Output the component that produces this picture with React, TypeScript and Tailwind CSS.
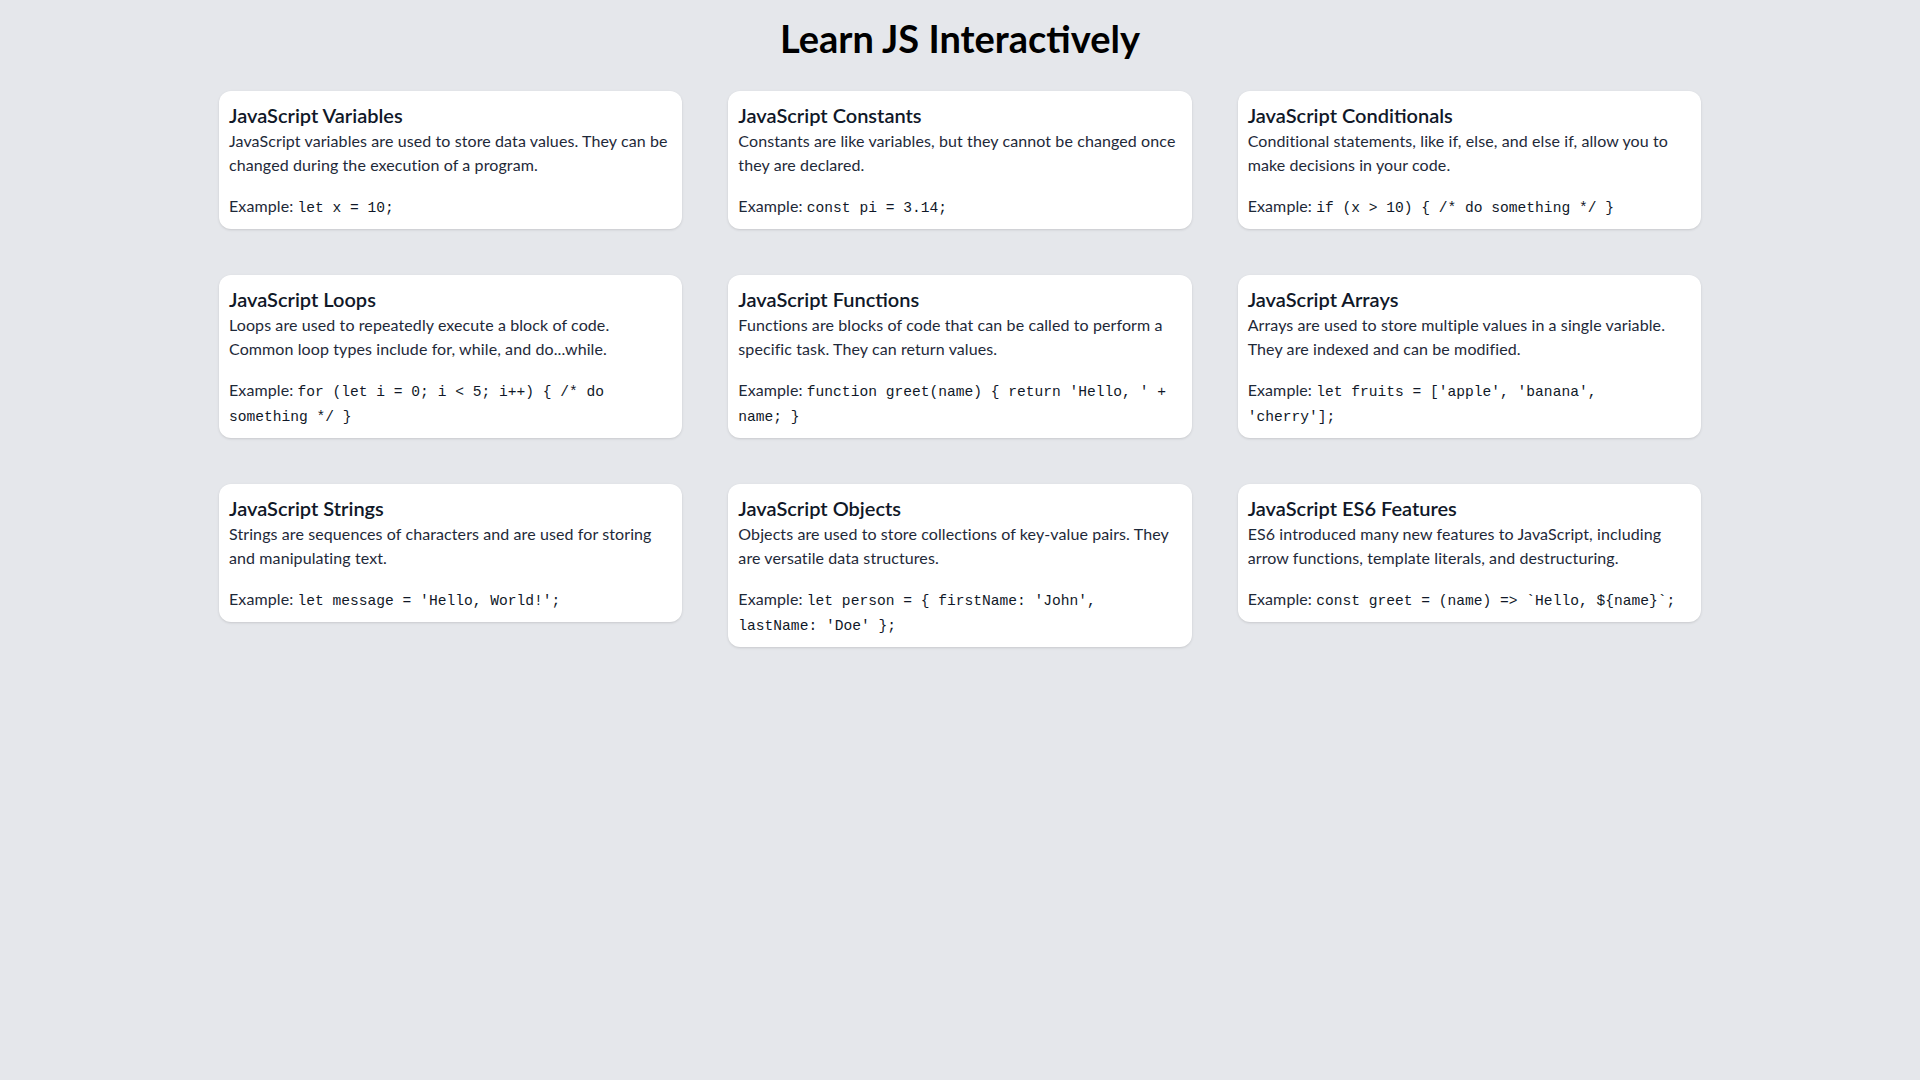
import React from "react";

type Topic = {
  title: string;
  text: string;
  example: string;
};

const topics: Topic[] = [
  {
    title: "JavaScript Variables",
    text: "JavaScript variables are used to store data values. They can be changed during the execution of a program.",
    example: "let x = 10;",
  },
  {
    title: "JavaScript Constants",
    text: "Constants are like variables, but they cannot be changed once they are declared.",
    example: "const pi = 3.14;",
  },
  {
    title: "JavaScript Conditionals",
    text: "Conditional statements, like if, else, and else if, allow you to make decisions in your code.",
    example: "if (x > 10) { /* do something */ }",
  },
  {
    title: "JavaScript Loops",
    text: "Loops are used to repeatedly execute a block of code. Common loop types include for, while, and do...while.",
    example: "for (let i = 0; i < 5; i++) { /* do something */ }",
  },
  {
    title: "JavaScript Functions",
    text: "Functions are blocks of code that can be called to perform a specific task. They can return values.",
    example: "function greet(name) { return 'Hello, ' + name; }",
  },
  {
    title: "JavaScript Arrays",
    text: "Arrays are used to store multiple values in a single variable. They are indexed and can be modified.",
    example: "let fruits = ['apple', 'banana', 'cherry'];",
  },
  {
    title: "JavaScript Strings",
    text: "Strings are sequences of characters and are used for storing and manipulating text.",
    example: "let message = 'Hello, World!';",
  },
  {
    title: "JavaScript Objects",
    text: "Objects are used to store collections of key-value pairs. They are versatile data structures.",
    example: "let person = { firstName: 'John', lastName: 'Doe' };",
  },
  {
    title: "JavaScript ES6 Features",
    text: "ES6 introduced many new features to JavaScript, including arrow functions, template literals, and destructuring.",
    example: "const greet = (name) => `Hello, ${name}`;",
  },
];

const TopicCard = ({ topic }: { topic: Topic }) => (
  <div className="bg-white rounded-xl shadow-sm px-[10px] pt-[10px] pb-[11px]">
    <h2 className="text-xl leading-7 font-semibold text-gray-900">{topic.title}</h2>
    <p className="text-base leading-6 tracking-[0.1px] text-gray-800">{topic.text}</p>
    <p className="mt-4 text-base leading-[25px] tracking-[0.1px] text-gray-800">
      Example:{" "}
      <code className="font-['Liberation_Mono',monospace] text-[14.6px] leading-none tracking-normal text-gray-900">
        {topic.example}
      </code>
    </p>
  </div>
);

export default function App() {
  return (
    <div className="min-h-screen bg-[#e5e7eb] pt-[18px] font-['Lato',sans-serif]">
      <h1 className="text-[38px] leading-10 font-bold text-center text-black">Learn JS Interactively</h1>
      <div className="w-[1482px] mx-auto mt-[33px] grid grid-cols-3 gap-[46px] items-start">
        {topics.map((t) => (
          <TopicCard key={t.title} topic={t} />
        ))}
      </div>
    </div>
  );
}
